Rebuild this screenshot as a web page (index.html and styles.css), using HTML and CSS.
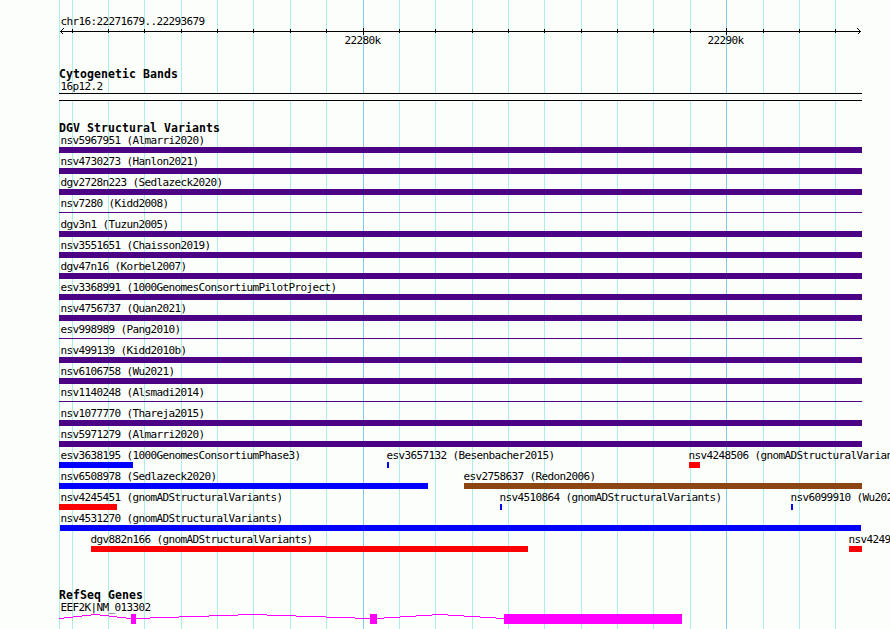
FILE: index.html
```
<!DOCTYPE html>
<html lang="en">
<head>
    <meta charset="UTF-8">
    <title>chr16:22271679..22293679</title>
    <link rel="stylesheet" href="styles.css">
</head>
<body>
<div class="browser">
    <svg class="grid" width="890" height="629">
        <path class="minor" d="M59.5 0V629M72.5 0V629M108.5 0V629M144.5 0V629M181.5 0V629M217.5 0V629M253.5 0V629M290.5 0V629M326.5 0V629M399.5 0V629M435.5 0V629M472.5 0V629M508.5 0V629M544.5 0V629M581.5 0V629M617.5 0V629M653.5 0V629M690.5 0V629M763.5 0V629M799.5 0V629M835.5 0V629"/>
        <path class="major" d="M363.5 0V629M726.5 0V629"/>
    </svg>

    <!-- ruler -->
    <div class="ruler">
        <div class="label">chr16:22271679..22293679</div>
        <svg class="axis" width="803" height="7" viewBox="59 28 803 7">
            <path d="M60 31.5H861"/>
            <path d="M72.5 29v4M108.5 29v4M144.5 29v4M181.5 29v4M217.5 29v4M253.5 29v4M290.5 29v4M326.5 29v4M399.5 29v4M435.5 29v4M472.5 29v4M508.5 29v4M544.5 29v4M581.5 29v4M617.5 29v4M653.5 29v4M690.5 29v4M763.5 29v4M799.5 29v4M835.5 29v4"/>
            <path d="M363.5 28v7M726.5 28v7"/>
            <path d="M63.5 28.5L60.5 31.5L63.5 34.5M857.5 28.5L860.5 31.5L857.5 34.5"/>
        </svg>
        <div class="ticks">
            <span class="label">22280k</span>
            <span class="label">22290k</span>
        </div>
    </div>

    <!-- cytobands -->
    <div class="track cyto">
        <h2>Cytogenetic Bands</h2>
        <div class="label">16p12.2</div>
        <div class="band"></div>
    </div>

    <!-- structural variants -->
    <div class="track variants">
        <h2>DGV Structural Variants</h2>
        <div class="lane"><div class="feature"><div class="label">nsv5967951 (Almarri2020)</div><div class="bar"></div></div></div>
        <div class="lane"><div class="feature"><div class="label">nsv4730273 (Hanlon2021)</div><div class="bar"></div></div></div>
        <div class="lane"><div class="feature"><div class="label">dgv2728n223 (Sedlazeck2020)</div><div class="bar"></div></div></div>
        <div class="lane"><div class="feature"><div class="label">nsv7280 (Kidd2008)</div><div class="bar thin"></div></div></div>
        <div class="lane"><div class="feature"><div class="label">dgv3n1 (Tuzun2005)</div><div class="bar"></div></div></div>
        <div class="lane"><div class="feature"><div class="label">nsv3551651 (Chaisson2019)</div><div class="bar"></div></div></div>
        <div class="lane"><div class="feature"><div class="label">dgv47n16 (Korbel2007)</div><div class="bar"></div></div></div>
        <div class="lane"><div class="feature"><div class="label">esv3368991 (1000GenomesConsortiumPilotProject)</div><div class="bar"></div></div></div>
        <div class="lane"><div class="feature"><div class="label">nsv4756737 (Quan2021)</div><div class="bar"></div></div></div>
        <div class="lane"><div class="feature"><div class="label">esv998989 (Pang2010)</div><div class="bar thin"></div></div></div>
        <div class="lane"><div class="feature"><div class="label">nsv499139 (Kidd2010b)</div><div class="bar"></div></div></div>
        <div class="lane"><div class="feature"><div class="label">nsv6106758 (Wu2021)</div><div class="bar"></div></div></div>
        <div class="lane"><div class="feature"><div class="label">nsv1140248 (Alsmadi2014)</div><div class="bar thin"></div></div></div>
        <div class="lane"><div class="feature"><div class="label">nsv1077770 (Thareja2015)</div><div class="bar"></div></div></div>
        <div class="lane"><div class="feature"><div class="label">nsv5971279 (Almarri2020)</div><div class="bar"></div></div></div>
        <div class="lane">
            <div class="feature"><div class="label">esv3638195 (1000GenomesConsortiumPhase3)</div><div class="bar gain" style="width: 74px"></div></div>
            <div class="feature inner" style="margin-left: 328px"><div class="label">esv3657132 (Besenbacher2015)</div><div class="bar gain" style="width: 2px"></div></div>
            <div class="feature inner" style="margin-left: 630px"><div class="label">nsv4248506 (gnomADStructuralVariants)</div><div class="bar loss" style="width: 11px"></div></div>
        </div>
        <div class="lane">
            <div class="feature"><div class="label">nsv6508978 (Sedlazeck2020)</div><div class="bar gain" style="width: 369px"></div></div>
            <div class="feature inner" style="margin-left: 405px"><div class="label">esv2758637 (Redon2006)</div><div class="bar both" style="width: 398px"></div></div>
        </div>
        <div class="lane">
            <div class="feature"><div class="label">nsv4245451 (gnomADStructuralVariants)</div><div class="bar loss" style="width: 58px"></div></div>
            <div class="feature inner" style="margin-left: 441px"><div class="label">nsv4510864 (gnomADStructuralVariants)</div><div class="bar gain" style="width: 2px"></div></div>
            <div class="feature inner" style="margin-left: 732px"><div class="label">nsv6099910 (Wu2021)</div><div class="bar gain" style="width: 2px"></div></div>
        </div>
        <div class="lane">
            <div class="feature"><div class="label">nsv4531270 (gnomADStructuralVariants)</div><div class="bar gain" style="width: 801px; margin-left: 1px"></div></div>
        </div>
        <div class="lane">
            <div class="feature inner" style="margin-left: 32px"><div class="label">dgv882n166 (gnomADStructuralVariants)</div><div class="bar loss" style="width: 437px"></div></div>
            <div class="feature inner" style="margin-left: 790px"><div class="label">nsv4249</div><div class="bar loss" style="width: 13px"></div></div>
        </div>
    </div>

    <!-- genes -->
    <div class="track genes">
        <h2>RefSeq Genes</h2>
        <div class="label">EEF2K|NM_013302</div>
        <svg class="gene" width="803" height="10" viewBox="59 614 803 10">
            <!-- introns, stepped one pixel at a time -->
            <path class="intron" d="M59 618.5H64M64 617.5H73M73 616.5H82M82 615.5H91M91 614.5H100M100 615.5H109M109 616.5H117M117 617.5H126M126 618.5H131"/>
            <path class="intron" d="M136 618.5H150M150 617.5H179M179 616.5H209M209 615.5H238M238 614.5H267M267 615.5H296M296 616.5H326M326 617.5H355M355 618.5H370"/>
            <path class="intron" d="M377 618.5H384M384 617.5H400M400 616.5H416M416 615.5H432M432 614.5H448M448 615.5H464M464 616.5H480M480 617.5H496M496 618.5H504"/>
            <path class="exon" d="M131 614h5v10h-5zM370 614h7v10h-7zM504 614h178v10h-178z"/>
        </svg>
    </div>
</div>
</body>
</html>
```
FILE: styles.css
```
body{
    margin: 0;
    background-color: #fcfefc;
    overflow: hidden;
}
.browser{
    position: relative;
    box-sizing: border-box;
    width: 890px;
    height: 629px;
    padding: 15px 0 0 59px;
    overflow: hidden;
    font-family: "DejaVu Sans Mono", monospace;
    color: #000;
}
svg{
    display: block;
    shape-rendering: crispEdges;
}

/* vertical guide lines behind every track */
.grid{
    position: absolute;
    left: 0;
    top: 0;
    z-index: -1;
}
.grid .minor{
    stroke: #aceeec;
}
.grid .major{
    stroke: #84caec;
}

.label{
    padding-left: 1.4px;
    font-size: 11px;
    line-height: 13px;
    letter-spacing: -0.622px;
    white-space: nowrap;
}
h2{
    margin: 0;
    font-size: 11.5px;
    line-height: 12px;
    font-weight: bold;
    letter-spacing: 0.077px;
}

.ruler{
    height: 53px;
}
.axis{
    fill: none;
    stroke: #000;
}
.ticks{
    display: flex;
    gap: 326px;
    margin-top: -1px;
    padding-left: 284px;
}
.ticks .label{
    box-sizing: border-box;
    width: 37px;
}

.cyto{
    height: 54px;
}
.band{
    width: 803px;
    height: 6px;
    border-top: 1px solid #000;
    border-bottom: 1px solid #000;
    background-color: #fcfefc;
}

.variants{
    height: 467px;
}
.lane{
    display: grid;
    height: 21px;
}
.feature{
    grid-area: 1 / 1;
}
.feature.inner .label{
    padding-left: 0;
    margin-left: -0.6px;
}
.bar{
    width: 803px;
    height: 6px;
    background-color: #4c0284;
}
.bar.thin{
    height: 1px;
    margin-top: 2px;
}
.bar.gain{
    background-color: #00f;
}
.bar.loss{
    background-color: #f00;
}
.bar.both{
    background-color: #8c4614;
}

.gene .intron{
    fill: none;
    stroke: #f0f;
}
.gene .exon{
    fill: #f0f;
}
```
